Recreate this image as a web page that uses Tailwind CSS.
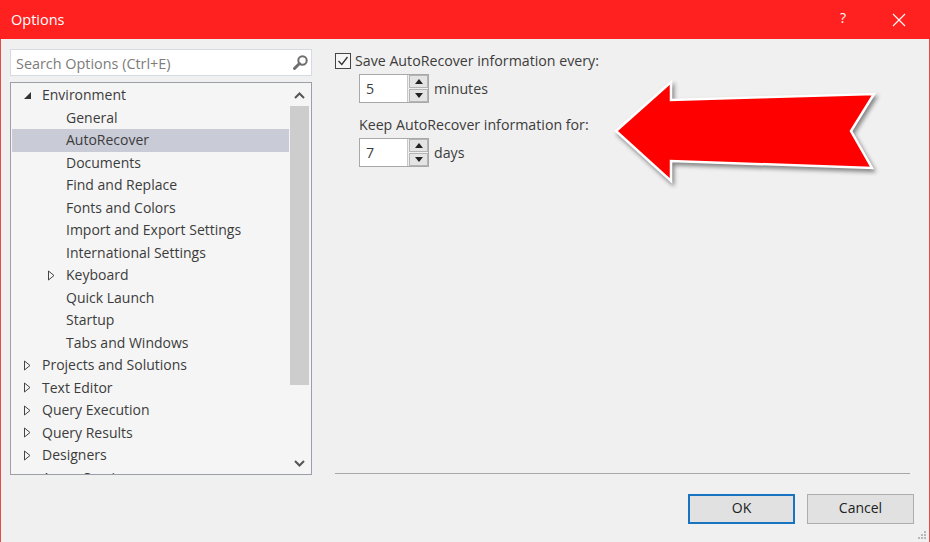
<!DOCTYPE html>
<html lang="en">
<head>
  <meta charset="UTF-8" />
  <title>Options</title>
  <script src="https://cdn.jsdelivr.net/npm/@tailwindcss/browser@4"></script>
</head>
<body class="w-[930px] h-[542px] overflow-hidden bg-[#f0f0f0] font-['Open_Sans',sans-serif] text-[14px] text-[#3c3c3c]">
<div class="relative h-[542px] flex flex-col border-x border-[#e84a4a]">

  <!-- Title bar -->
  <div class="h-[39px] -mx-px bg-[#ff2020] flex items-center text-white shrink-0">
    <span class="ml-[11px] text-[14.5px] leading-none pt-[2px]">Options</span>
    <span class="ml-auto mr-[46px] text-[14px] leading-none pb-[3px]">?</span>
    <svg class="mr-[24px]" width="14" height="14" viewBox="0 0 14 14" fill="none" stroke="#fff" stroke-width="1.1"><path d="M1 1L13 13M13 1L1 13"/></svg>
  </div>

  <div class="flex flex-1 min-h-0">
    <!-- Left column -->
    <div class="w-[302px] ml-[9px] mt-[10px] shrink-0">
      <div class="h-[27px] bg-white border border-[#d5dbe3] flex items-center pl-[5px] text-[#7c7c7c]">
        <span class="text-[14.4px] pt-[2px]">Search Options (Ctrl+E)</span>
        <svg class="ml-auto mr-[2px]" width="17" height="17" viewBox="0 0 17 17" fill="none" stroke="#6e6e6e"><circle cx="10.5" cy="6.5" r="4.2" stroke-width="2"/><path d="M7.5 9.5L2.5 14.5" stroke-width="3" stroke-linecap="round"/></svg>
      </div>

      <!-- Tree -->
      <div class="mt-[6px] h-[393px] bg-[#f5f5f5] border border-[#9a9fa8] flex overflow-hidden leading-[22.5px] pt-px">
        <div class="w-[277px] ml-px shrink-0">
          <div class="h-[22.5px] flex items-center">
            <svg class="ml-[11px] w-[9px]" width="9" height="9" viewBox="0 0 9 9"><path d="M8 1V8H1Z" fill="#333"/></svg>
            <span class="ml-[10px]">Environment</span>
          </div>
          <div class="h-[22.5px] pl-[54px]">General</div>
          <div class="h-[22.5px] pl-[54px] bg-[#c9cbd6]">AutoRecover</div>
          <div class="h-[22.5px] pl-[54px]">Documents</div>
          <div class="h-[22.5px] pl-[54px]">Find and Replace</div>
          <div class="h-[22.5px] pl-[54px]">Fonts and Colors</div>
          <div class="h-[22.5px] pl-[54px]">Import and Export Settings</div>
          <div class="h-[22.5px] pl-[54px]">International Settings</div>
          <div class="h-[22.5px] flex items-center">
            <svg class="ml-[35px]" width="9" height="11" viewBox="0 0 9 11" fill="none" stroke="#444"><path d="M1.5 1L7 5.5L1.5 10Z"/></svg>
            <span class="ml-[10px]">Keyboard</span>
          </div>
          <div class="h-[22.5px] pl-[54px]">Quick Launch</div>
          <div class="h-[22.5px] pl-[54px]">Startup</div>
          <div class="h-[22.5px] pl-[54px]">Tabs and Windows</div>
          <div class="h-[22.5px] flex items-center">
            <svg class="ml-[11px]" width="9" height="11" viewBox="0 0 9 11" fill="none" stroke="#444"><path d="M1.5 1L7 5.5L1.5 10Z"/></svg>
            <span class="ml-[10px]">Projects and Solutions</span>
          </div>
          <div class="h-[22.5px] flex items-center">
            <svg class="ml-[11px]" width="9" height="11" viewBox="0 0 9 11" fill="none" stroke="#444"><path d="M1.5 1L7 5.5L1.5 10Z"/></svg>
            <span class="ml-[10px]">Text Editor</span>
          </div>
          <div class="h-[22.5px] flex items-center">
            <svg class="ml-[11px]" width="9" height="11" viewBox="0 0 9 11" fill="none" stroke="#444"><path d="M1.5 1L7 5.5L1.5 10Z"/></svg>
            <span class="ml-[10px]">Query Execution</span>
          </div>
          <div class="h-[22.5px] flex items-center">
            <svg class="ml-[11px]" width="9" height="11" viewBox="0 0 9 11" fill="none" stroke="#444"><path d="M1.5 1L7 5.5L1.5 10Z"/></svg>
            <span class="ml-[10px]">Query Results</span>
          </div>
          <div class="h-[22.5px] flex items-center">
            <svg class="ml-[11px]" width="9" height="11" viewBox="0 0 9 11" fill="none" stroke="#444"><path d="M1.5 1L7 5.5L1.5 10Z"/></svg>
            <span class="ml-[10px]">Designers</span>
          </div>
          <div class="h-[22.5px] pl-[30px]">Azure Service</div>
        </div>

        <!-- Scrollbar -->
        <div class="w-[19px] ml-[1px] flex flex-col items-center shrink-0">
          <div class="h-[22px] flex items-center justify-center">
            <svg width="11" height="7" viewBox="0 0 11 7" fill="none" stroke="#555" stroke-width="2"><path d="M1 6L5.5 1.5L10 6"/></svg>
          </div>
          <div class="w-full h-[279px] bg-[#cdcdcd]"></div>
          <svg class="mt-[75px]" width="11" height="7" viewBox="0 0 11 7" fill="none" stroke="#555" stroke-width="2"><path d="M1 1L5.5 5.5L10 1"/></svg>
        </div>
      </div>
    </div>

    <!-- Right panel -->
    <div class="flex-1 ml-[23px] mr-[19px] flex flex-col min-w-0 text-[14.2px]">
      <div class="mt-[13px] h-[18px] flex items-center">
        <div class="w-[16px] h-[16px] border border-[#444] bg-[#f6f6f6] flex items-center justify-center shrink-0">
          <svg width="12" height="12" viewBox="0 0 12 12" fill="none" stroke="#333" stroke-width="1.3"><path d="M1.5 6L4.8 9.5L10.5 2"/></svg>
        </div>
        <span class="ml-[4px]">Save AutoRecover information every:</span>
      </div>

      <div class="mt-[4px] ml-[24px] flex items-center">
        <div class="w-[70px] h-[29px] border border-[#a8a8a8] bg-white flex">
          <span class="flex-1 pl-[6px] leading-[27px]">5</span>
          <div class="w-[21px] flex flex-col gap-px bg-[#f0f0f0] border-l border-[#c8c8c8] pl-[1px]">
            <div class="flex-1 bg-[#e4e4e4] border border-[#b5b5b5] flex items-center justify-center"><svg width="8" height="5" viewBox="0 0 8 5"><path d="M4 0L8 5H0Z" fill="#222"/></svg></div>
            <div class="flex-1 bg-[#e4e4e4] border border-[#b5b5b5] flex items-center justify-center"><svg width="8" height="5" viewBox="0 0 8 5"><path d="M0 0H8L4 5Z" fill="#222"/></svg></div>
          </div>
        </div>
        <span class="ml-[5px]">minutes</span>
      </div>

      <div class="mt-[12px] ml-[24px] h-[20px] leading-[20px]">Keep AutoRecover information for:</div>

      <div class="mt-[3px] ml-[24px] flex items-center">
        <div class="w-[70px] h-[29px] border border-[#a8a8a8] bg-white flex">
          <span class="flex-1 pl-[6px] leading-[27px]">7</span>
          <div class="w-[21px] flex flex-col gap-px bg-[#f0f0f0] border-l border-[#c8c8c8] pl-[1px]">
            <div class="flex-1 bg-[#e4e4e4] border border-[#b5b5b5] flex items-center justify-center"><svg width="8" height="5" viewBox="0 0 8 5"><path d="M4 0L8 5H0Z" fill="#222"/></svg></div>
            <div class="flex-1 bg-[#e4e4e4] border border-[#b5b5b5] flex items-center justify-center"><svg width="8" height="5" viewBox="0 0 8 5"><path d="M0 0H8L4 5Z" fill="#222"/></svg></div>
          </div>
        </div>
        <span class="ml-[5px]">days</span>
      </div>

      <div class="mt-auto mb-[68px] border-t border-[#a8a8a8]"></div>
    </div>
  </div>

  <!-- Dialog buttons, over the bottom of the right panel -->
  <div class="absolute right-[15px] bottom-[18px] flex gap-[12px] text-[#222]">
    <button class="w-[107px] h-[30px] bg-[#e1e1e1] border-2 border-[#1873c0] pb-[3px]">OK</button>
    <button class="w-[107px] h-[30px] bg-[#e1e1e1] border border-[#adadad] pb-[3px]">Cancel</button>
  </div>

  <!-- Resize grip -->
  <svg class="absolute right-[2px] bottom-[2px]" width="10" height="10" viewBox="0 0 10 10" fill="#b8b8b8"><rect x="7" y="1" width="2" height="2"/><rect x="4" y="4" width="2" height="2"/><rect x="7" y="4" width="2" height="2"/><rect x="1" y="7" width="2" height="2"/><rect x="4" y="7" width="2" height="2"/><rect x="7" y="7" width="2" height="2"/></svg>

  <!-- Annotation arrow on top of the dialog -->
  <svg class="absolute left-[-1px] top-0 pointer-events-none" width="930" height="200" viewBox="0 0 930 200" style="filter: drop-shadow(2px 3px 2px rgba(0,0,0,.45))">
    <path d="M616 131L671 82V100L874 94L851 131L872 168L671 161V181Z" fill="#ff0000" stroke="#fff" stroke-width="2.5" stroke-linejoin="miter"/>
  </svg>
</div>
</body>
</html>
